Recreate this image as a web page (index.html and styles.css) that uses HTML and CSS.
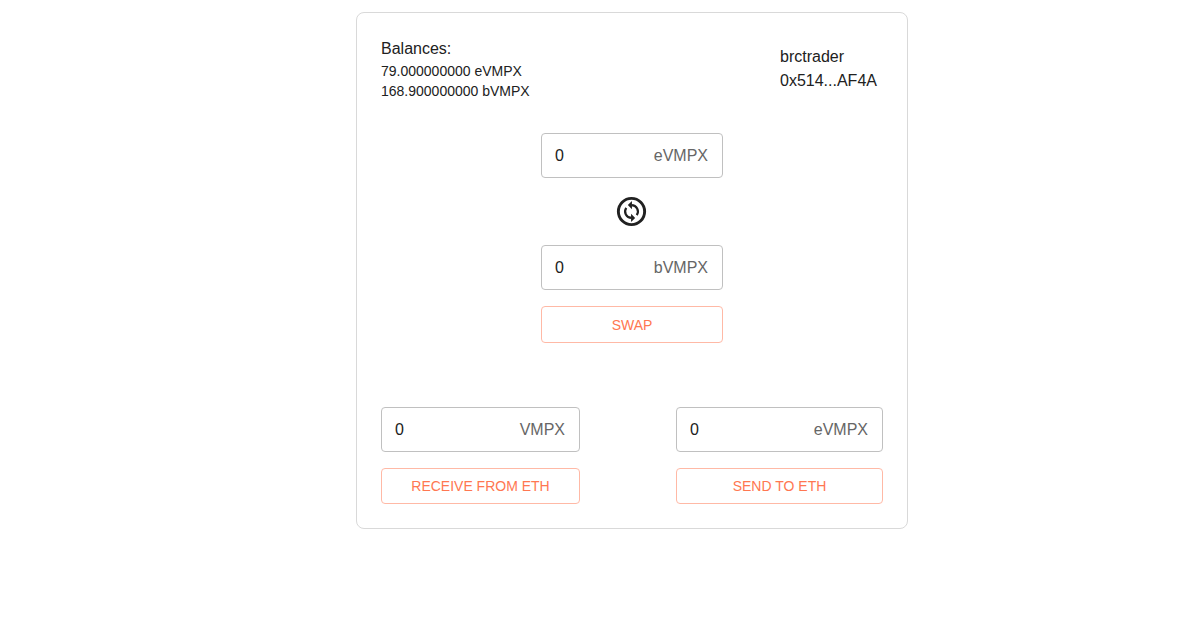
FILE: index.html
```html
<!DOCTYPE html>
<html lang="en">
<head>
<meta charset="utf-8">
<meta name="viewport" content="width=device-width, initial-scale=1">
<title>VMPX Swap</title>
<link rel="stylesheet" href="styles.css">
</head>
<body>
<main class="page">
  <section class="card">
    <header class="summary">
      <div>
        <div>Balances:</div>
        <div class="balance">79.000000000 eVMPX</div>
        <div class="balance">168.900000000 bVMPX</div>
      </div>
      <div class="account">
        <div>brctrader</div>
        <div>0x514...AF4A</div>
      </div>
    </header>
    <form class="swap">
      <label class="field"><input class="amount" type="text" inputmode="decimal" value="0"><span class="unit">eVMPX</span></label>
      <button class="flip" type="button" aria-label="Switch direction">
        <svg class="flip-icon" viewBox="0 0 24 24" aria-hidden="true">
          <circle cx="12" cy="12" r="9" fill="none" stroke="currentColor" stroke-width="2"/>
          <path d="M12 7.600A4.400 4.400 0 0 1 15.600 14.500M12 16.400A4.400 4.400 0 0 1 8.400 9.500" fill="none" stroke="currentColor" stroke-width="1.500"/>
          <path d="M12.300 4.800v5.600L9.500 7.600zM11.700 19.200v-5.600l2.800 2.800z" fill="currentColor"/>
        </svg>
      </button>
      <label class="field"><input class="amount" type="text" inputmode="decimal" value="0"><span class="unit">bVMPX</span></label>
      <button class="action action-main" type="button">SWAP</button>
    </form>
    <div class="bridge">
      <form class="transfer">
        <label class="field"><input class="amount" type="text" inputmode="decimal" value="0"><span class="unit">VMPX</span></label>
        <button class="action" type="button">RECEIVE FROM ETH</button>
      </form>
      <form class="transfer">
        <label class="field"><input class="amount" type="text" inputmode="decimal" value="0"><span class="unit">eVMPX</span></label>
        <button class="action" type="button">SEND TO ETH</button>
      </form>
    </div>
  </section>
</main>
</body>
</html>
```

FILE: styles.css
```css
* {
  box-sizing: border-box;
}

body {
  margin: 0;
  background: #fff;
  color: #212121;
  font: 16px/24px "Liberation Sans", Arial, sans-serif;
}

.page {
  padding: 12px 0 12px 64px;
}

.card {
  max-width: 552px;
  margin: 0 auto;
  padding: 24px;
  border: 1px solid #d9d9d9;
  border-radius: 8px;
}

.summary {
  display: flex;
  align-items: center;
  justify-content: space-between;
}

.balance {
  font-size: 14px;
  line-height: 20px;
}

.account {
  min-width: 103px;
}

.swap,
.transfer {
  display: flex;
  flex-direction: column;
  gap: 16px;
  min-width: 0;
}

.swap {
  width: 182px;
  margin: 32px auto 64px;
}

.bridge {
  display: grid;
  grid-template-columns: minmax(0, 199fr) minmax(0, 207fr);
  column-gap: 96px;
}

.field {
  display: flex;
  align-items: center;
  height: 45px;
  padding: 0 14px 0 13px;
  border: 1px solid #c0c0c0;
  border-radius: 4px;
}

.amount {
  flex: 1;
  width: 100%;
  min-width: 0;
  padding: 0;
  border: 0;
  outline: 0;
  background: transparent;
  color: inherit;
  font: inherit;
}

.unit {
  color: #666;
}

.flip {
  display: flex;
  align-self: center;
  width: 36px;
  padding: 0;
  border: 0;
  background: none;
  color: #212121;
  cursor: pointer;
}

.flip-icon {
  width: 35px;
  height: 35px;
}

.action {
  height: 36px;
  padding: 0 16px;
  border: 1px solid #ffb9a6;
  border-radius: 4px;
  background: transparent;
  color: #ff7751;
  font: 14px/24px "Liberation Sans", Arial, sans-serif;
  cursor: pointer;
}

.action-main {
  height: 37px;
}
```
